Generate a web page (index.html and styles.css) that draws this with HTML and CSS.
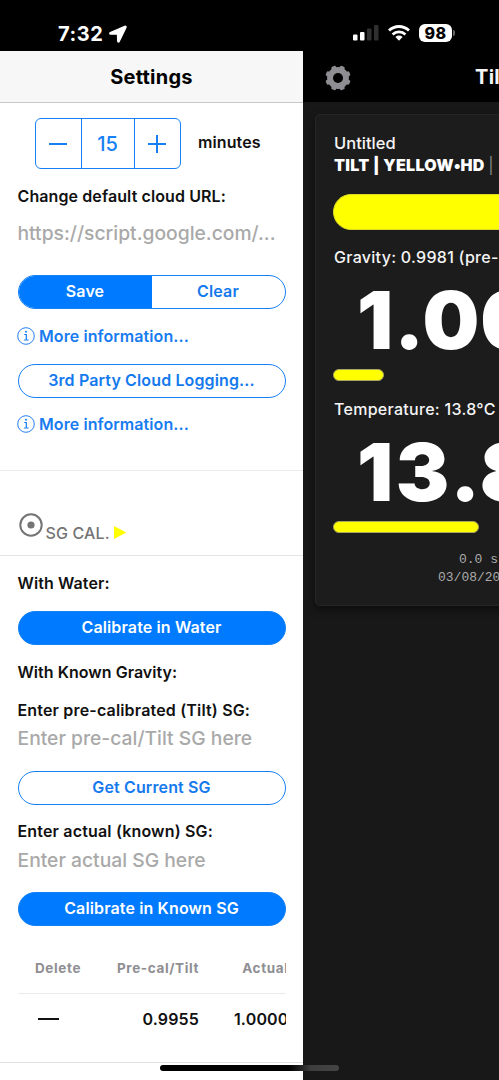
FILE: index.html
```html
<!DOCTYPE html>
<html lang="en">
<head>
<meta charset="utf-8">
<title>Settings</title>
<link rel="stylesheet" href="styles.css">
</head>
<body>
<div class="screen">
  <header class="status">
    <div class="clock"><span>7:32</span>
      <svg width="18" height="18" viewBox="0 0 18 18"><path d="M15.800 1.300 1.300 7.500c-.8.400-.7 1.500.2 1.500l7 .2.200 6.900c.1 1 1.100 1.200 1.500.3L17 2.500c.3-.8-.4-1.500-1.200-1.200Z" fill="#fff" stroke="#fff" stroke-width="1.300" stroke-linejoin="round"/></svg>
    </div>
    <div class="indicators">
      <svg width="26" height="16" viewBox="0 0 26 16"><rect y="9.500" width="4.500" height="6" rx="1" fill="#fff"/><rect x="7" y="7" width="4.500" height="8.500" rx="1" fill="#fff"/><rect x="14" y="3.500" width="4.500" height="12" rx="1" fill="#303030"/><rect x="21" y="0" width="4.500" height="15.500" rx="1" fill="#303030"/></svg>
      <svg class="wifi" width="22" height="16" viewBox="0 0 22 16"><g fill="none" stroke="#fff" stroke-width="2.800"><path d="M1 5.600a14.200 14.200 0 0 1 20 0"/><path d="M4.600 9.400a9.200 9.200 0 0 1 12.800 0"/></g><path d="M7.400 12a5.200 5.200 0 0 1 7.200 0L11 15.700Z" fill="#fff"/></svg>
      <span class="battery">98</span><i class="battery-tip"></i>
    </div>
  </header>
  <div class="views">
    <aside class="panel">
      <h1 class="panel-title">Settings</h1>
      <section class="cloud">
        <div class="interval">
          <div class="stepper"><span class="sign"></span><span class="value">15</span><span class="sign plus"></span></div>
          <span class="unit">minutes</span>
        </div>
        <label class="label url-label">Change default cloud URL:</label>
        <div class="field url">https://script.google.com/...</div>
        <div class="segmented"><span class="on">Save</span><span>Clear</span></div>
        <a class="more"><svg width="18" height="18" viewBox="0 0 18 18"><circle cx="9" cy="9" r="8.300" fill="none" stroke="#2680ee"/><path d="M7.200 7.500H9.300V13M6.900 13h4.700" fill="none" stroke="#177cf5" stroke-width="1.200"/><circle cx="9" cy="4.800" r="1" fill="#177cf5"/></svg><span>More information...</span></a>
        <div class="button logging">3rd Party Cloud Logging...</div>
        <a class="more second"><svg width="18" height="18" viewBox="0 0 18 18"><circle cx="9" cy="9" r="8.300" fill="none" stroke="#2680ee"/><path d="M7.200 7.500H9.300V13M6.900 13h4.700" fill="none" stroke="#177cf5" stroke-width="1.200"/><circle cx="9" cy="4.800" r="1" fill="#177cf5"/></svg><span>More information...</span></a>
      </section>
      <div class="section-head">
        <svg width="24" height="24" viewBox="0 0 24 24"><circle cx="12" cy="12" r="10.700" fill="none" stroke="#747474" stroke-width="2"/><circle cx="12" cy="12" r="3.600" fill="#747474"/></svg>
        <span>SG CAL.</span>
        <svg class="play" width="13" height="13" viewBox="0 0 13 13"><path d="M0 0 12.300 6.500 0 13Z" fill="#ff0"/></svg>
      </div>
      <section class="calibration">
        <div class="label">With Water:</div>
        <div class="button filled water">Calibrate in Water</div>
        <div class="label known">With Known Gravity:</div>
        <label class="label wide pre">Enter pre-calibrated (Tilt) SG:</label>
        <div class="field pre-field">Enter pre-cal/Tilt SG here</div>
        <div class="button current">Get Current SG</div>
        <label class="label wide actual">Enter actual (known) SG:</label>
        <div class="field actual-field">Enter actual SG here</div>
        <div class="button filled known-button">Calibrate in Known SG</div>
        <div class="table">
          <div class="row head"><span class="c1">Delete</span><span class="c2">Pre-cal/Tilt</span><span class="c3">Actual</span></div>
          <div class="row data"><span class="c1"><i class="dash"></i></span><span class="c2">0.9955</span><span class="c3">1.0000</span></div>
        </div>
      </section>
    </aside>
    <main class="main">
      <div class="navbar">
        <svg class="gear" width="26" height="26" viewBox="-13 -13 26 26"><g fill="#8e8e93"><rect x="-2.500" y="-12.700" width="5" height="25.400" rx="1.500" transform="rotate(22.500)"/><rect x="-2.500" y="-12.700" width="5" height="25.400" rx="1.500" transform="rotate(67.500)"/><rect x="-2.500" y="-12.700" width="5" height="25.400" rx="1.500" transform="rotate(112.500)"/><rect x="-2.500" y="-12.700" width="5" height="25.400" rx="1.500" transform="rotate(157.500)"/><circle r="10.900"/></g><circle r="5" fill="#000"/></svg>
        <span class="app-title">Tilt</span>
      </div>
      <article class="card">
        <div class="name">Untitled</div>
        <div class="device">TILT | YELLOW•HD <span class="bar">|</span></div>
        <div class="color"></div>
        <div class="metric gravity">Gravity: 0.9981 (pre-</div>
        <div class="number">1.00</div>
        <div class="level low"></div>
        <div class="metric temperature">Temperature: 13.8°C</div>
        <div class="number temp">13.8</div>
        <div class="level high"></div>
        <div class="stamp"><div class="age">0.0 s</div><div>03/08/20</div></div>
      </article>
    </main>
  </div>
  <div class="home"></div>
</div>
</body>
</html>
```
FILE: styles.css
```css
* { box-sizing: border-box; }
body { margin: 0; background: #000; font-family: Inter, sans-serif; }
.screen { position: relative; width: 499px; height: 1080px; overflow: hidden; display: flex; flex-direction: column; white-space: nowrap; }
.status { height: 51px; flex: none; background: #000; color: #fff; display: flex; justify-content: space-between; padding: 0 44px 0 58px; }
.clock { display: flex; font-size: 20px; font-weight: 700; line-height: 24px; padding-top: 22px; gap: 5px; letter-spacing: .6px; }
.clock svg { margin-top: 3px; }
.indicators { display: flex; align-items: flex-start; padding-top: 25px; }
.wifi { margin-left: 9px; }
.battery { width: 33px; height: 18px; background: #fff; border-radius: 6px; color: #000; font-size: 16px; font-weight: 800; line-height: 18px; text-align: center; letter-spacing: .5px; margin-left: 9px; margin-top: -1px; }
.battery-tip { width: 2px; height: 6px; background: #666; border-radius: 0 2px 2px 0; margin: 5px 0 0 1px; }
.views { display: flex; flex: 1; min-height: 0; }
.panel { width: 303px; flex: none; background: #fff; color: #111; overflow: hidden; }
.panel-title { margin: 0; height: 52px; background: #f7f7f7; border-bottom: 1px solid #c8c8c8; text-align: center; font-size: 20px; line-height: 52px; font-weight: 700; letter-spacing: .25px; color: #000; }
.cloud { height: 368px; border-bottom: 1px solid #ebebeb; padding: 15px 17px 0 17.500px; }
.interval { display: flex; padding-left: 17px; }
.stepper { width: 146px; height: 51px; border: 1px solid #1680f5; border-radius: 6px; display: flex; align-items: stretch; color: #1680f5; }
.sign { width: 45px; display: flex; align-items: center; justify-content: center; position: relative; }
.sign::before, .plus::after { content: ""; width: 18px; height: 2px; background: #177ff5; }
.plus::after { position: absolute; width: 2px; height: 18px; }
.value { flex: 1; border: solid #1680f5; border-width: 0 1px; text-align: center; font-size: 20px; line-height: 50px; font-weight: 500; }
.unit { margin-left: 17.500px; line-height: 49px; font-size: 16px; font-weight: 600; letter-spacing: .1px; }
.label { display: block; height: 24px; line-height: 24px; font-size: 16px; font-weight: 600; letter-spacing: .1px; }
.wide { letter-spacing: .17px; }
.url-label { margin-top: 15px; }
.field { height: 28px; line-height: 28px; font-size: 19.300px; font-weight: 500; color: #a9a9a9; }
.url { margin-top: 11px; }
.segmented, .button { width: 268px; height: 34px; border: 1px solid #1680f5; border-radius: 17px; color: #1579ee; font-size: 16px; line-height: 31px; font-weight: 600; text-align: center; letter-spacing: .13px; }
.segmented { margin-top: 28px; display: flex; overflow: hidden; }
.segmented span { flex: 1; }
.segmented .on, .filled { background: #007aff; color: #fff; }
.more { display: flex; align-items: center; height: 24px; margin-top: 15px; gap: 4px; color: #177cf0; font-size: 16px; font-weight: 600; letter-spacing: .08px; }
.more svg { margin-left: -.5px; margin-top: -1px; }
.logging { margin-top: 16px; }
.second { margin-top: 14px; }
.section-head { height: 85px; border-bottom: 1px solid #e4e4e4; padding: 42px 0 0 19px; display: flex; align-items: flex-start; color: #747474; font-size: 16px; font-weight: 500; line-height: 24px; }
.section-head span { margin: 8px 0 0 2.500px; letter-spacing: .15px; }
.play { margin: 13px 0 0 4.500px; }
.calibration { height: 507px; border-bottom: 1px solid #e0e0e0; padding: 15px 17px 0 17.500px; }
.water { margin-top: 16px; }
.known { margin-top: 15px; letter-spacing: .03px; }
.pre { margin-top: 14px; }
.pre-field { margin-top: 2px; }
.current { margin-top: 19px; }
.actual { margin-top: 14px; }
.actual-field { margin-top: 3px; }
.known-button { margin-top: 18px; }
.table { width: 268px; overflow: hidden; }
.row { display: flex; }
.head { height: 68px; border-bottom: 1px solid #ebebeb; padding-top: 32px; line-height: 20px; font-size: 13.500px; font-weight: 700; letter-spacing: .62px; color: #8e8e93; }
.data { height: 50px; line-height: 50px; font-size: 16px; font-weight: 600; letter-spacing: .15px; }
.c1, .c2, .c3 { flex: none; }
.c1 { width: 82px; padding-left: 17.500px; }
.c2 { width: 99.500px; text-align: right; }
.c3 { width: 89.500px; text-align: right; }
.dash { display: block; width: 21px; height: 2px; margin: 23.500px 0 0 3px; background: #111; }
.main { width: 196px; flex: none; background: #181818; overflow: hidden; color: #f5f5f5; }
.navbar { height: 51px; background: #000; display: flex; align-items: center; padding: 2px 0 0 22px; }
.gear { flex: none; }
.app-title { margin: -1px 0 0 124px; font-size: 20px; font-weight: 700; letter-spacing: .3px; }
.card { width: 400px; height: 492px; margin: 12px 0 0 12px; padding: 17px 18px 0; background: #1c1c1c; border: 1px solid #262626; border-radius: 5px; box-shadow: 0 3px 8px #0008; }
.name { font-size: 16.500px; line-height: 22px; font-weight: 500; }
.device { font-size: 16px; line-height: 23px; font-weight: 900; letter-spacing: .3px; color: #fff; }
.bar { font-weight: 400; color: #888; }
.color { height: 36px; border-radius: 18px; background: #ff0; margin: 17px 0 0 -1px; border: 1px solid #dddd25; }
.metric { height: 24px; line-height: 24px; font-size: 16px; font-weight: 500; letter-spacing: .29px; }
.gravity { margin-top: 15px; }
.number { font-size: 80px; line-height: 81px; height: 81px; font-weight: 900; color: #fff; padding-left: 23px; margin-top: 10px; letter-spacing: 1px; }
.temp { letter-spacing: 2.500px; }
.level { height: 12px; border-radius: 6px; background: #ff0; border: 1px solid #aaa760; margin-left: -1px; }
.low { width: 51px; margin-top: 9px; }
.temperature { margin-top: 16px; }
.high { width: 146px; margin-top: 9px; }
.stamp { margin: 18px 0 0 104px; font-family: "Liberation Mono", monospace; font-size: 13px; line-height: 18px; color: #aaa; }
.age { padding-left: 21px; }
.home { position: absolute; left: 160px; top: 1065px; width: 179px; height: 6px; border-radius: 3px; background: linear-gradient(90deg, #000 0 72%, #3d3d3d 84%, #444); }
```
